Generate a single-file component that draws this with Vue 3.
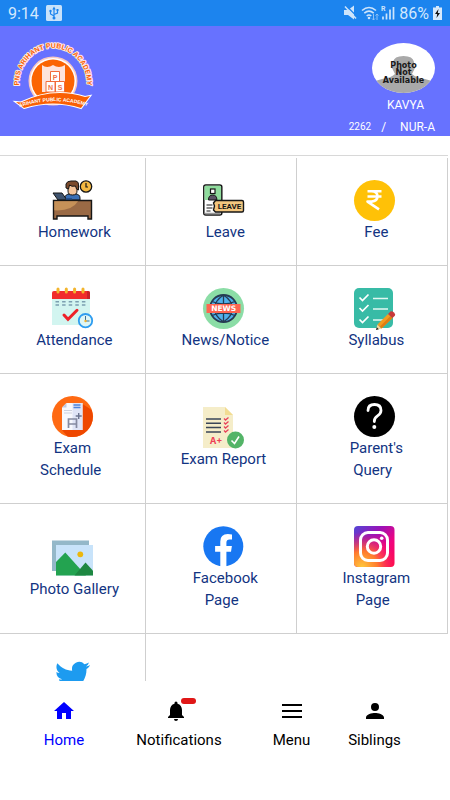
<script setup>
const homework = `
<path d="M13 20v-2q0-4 5-4h5q5 0 5 4v2z" fill="#3a6fb5" stroke="#161616"/>
<path d="M16 5h9v6q0 4-4.500 4T16 11z" fill="#f5c59b" stroke="#161616"/>
<path d="M14 8V4q1-3 5-3h5q3 1 2.500 4v5l-2-1-1-3q-4 1-6-1l-1 4z" fill="#7b4a2b" stroke="#161616"/>
<circle cx="34" cy="6.500" r="5.700" fill="#f4b942" stroke="#161616" stroke-width="1.300"/>
<path d="M34 3v4h2" fill="none" stroke="#161616" stroke-width="1.200"/>
<path d="M1 13h9l5 7H6z" fill="#3f5470" stroke="#161616"/>
<path d="M14 18h6v2h-6z" fill="#254f8b"/>
<path d="M1.500 20.500h38V39H36v-3H5v3H1.500z" fill="#9a6a45" stroke="#161616" stroke-width="1.400"/>
<path d="M2.300 21.300H26q-6 10-23.700 9z" fill="#c69158"/>`

const leave = `
<rect x=".8" y="5" width="18" height="30" rx="2" fill="#fff" stroke="#161616" stroke-width="1.500"/>
<path d="M1.500 20V7q0-1.300 1.300-1.300h14q1.300 0 1.300 1.300v13z" fill="#8fdc9d"/>
<path d="M1.500 33.500h16" stroke="#9a9a9a" stroke-width="1.500"/>
<path d="M5.500 20q0-5 4.200-5t4.200 5z" fill="#5b5266" stroke="#161616"/>
<rect x="7.500" y="9" width="4.500" height="4.500" fill="#fff" stroke="#161616" stroke-width="1.200"/>
<path d="M3.500 25h6M3.500 28h6M3.500 31h4" stroke="#161616" stroke-width="1.200"/>
<path d="M12.500 20.500h26.500q1.500 0 1.500 1.500v8.500q0 1.500-1.500 1.500H12.500l-2-2 1-4-1-3z" fill="#f3c67e" stroke="#161616" stroke-width="1.400"/>
<text x="26.500" y="29.200" font-size="8" font-weight="700" text-anchor="middle" fill="#161616" font-family="Roboto, sans-serif">LEAVE</text>`

const fee = `
<circle cx="20.500" cy="20.500" r="20.500" fill="#ffc107"/>
<path d="M13.500 11.300h14M13.500 16.500h14M13.500 11.300h4q6 .2 6 5t-6 5.300h-4l11.500 7.700" fill="none" stroke="#fff" stroke-width="2.600" stroke-linejoin="round"/>`

const attendance = `
<path d="M0 9h38v28H0z" fill="#d2f5f0"/>
<path d="M0 11V5q0-2 2-2h34q2 0 2 2v6z" fill="#f12c2c"/><path d="M35 3h1q2 0 2 2v6h-3z" fill="#c91f2a"/>
<path d="M6 1v3M14.300 1v3M22.600 1v3M31 1v3" stroke="#f3b52e" stroke-width="3" stroke-linecap="round"/>
<path d="M3.500 13.700h30M3.500 17h30" stroke="#7b9fb0" stroke-width="1.600" stroke-dasharray="3.500 3.100"/>
<path d="m12 27 4 4.300 9-9" fill="none" stroke="#ee2128" stroke-width="3" stroke-linecap="round"/>
<circle cx="33.500" cy="32.700" r="6.700" fill="#def6f5" stroke="#2f9df0" stroke-width="1.800"/>
<path d="M33.500 28v5h4" fill="none" stroke="#3b6f95"/><circle cx="33.500" cy="33" r="1.200" fill="#f4b12e"/>`

const news = `
<circle cx="20.500" cy="20.500" r="20.500" fill="#8bdda6"/>
<circle cx="20.500" cy="20.500" r="13.500" fill="#4fb0ea" stroke="#263b53" stroke-width="1.800"/>
<path d="M20.500 7v27M9 13.500q11.500 5 23 0M9 27.500q11.500-5 23 0M20.500 7q-9 6-9 13.500t9 13.500q9-6 9-13.500T20.500 7" fill="none" stroke="#263b53" stroke-width="1.300"/>
<rect x="3.500" y="16" width="34" height="9" fill="#ff6550"/>
<text x="20.700" y="23.300" font-size="7.500" font-weight="700" text-anchor="middle" fill="#fff" font-family="DejaVu Sans, sans-serif">NEWS</text>`

const syllabus = `
<rect width="39" height="40" rx="5" fill="#38bba6"/>
<path d="m5.500 9.500 3 3 6-6M5.500 20l3 3 6-6M5.500 31.500l3 3 6-6" fill="none" stroke="#fff" stroke-width="1.700"/>
<path d="M19 10.500h15M19 21h15M19 32h11" stroke="#e2f7f2" stroke-width="1.500"/>
<path d="m22 42 1.500-5.500 4 4z" fill="#f4d6a0"/><path d="m22 42 .8-2.800 2 2z" fill="#222"/>
<path d="M23.500 36.500 34 26l4.500 4-11 10.500z" fill="#f39b1f"/><path d="M26 38.500 36.500 28l2 2-11 10.500z" fill="#dd7d14"/>
<path d="m34 26 2.500-2.500q1.500-.8 3.500 1t.8 3.200L38.500 30z" fill="#c8383a"/>`

const examSchedule = `
<circle cx="20.500" cy="20.500" r="20.500" fill="#ff6a13"/>
<path d="M30.500 8 39.700 14A20.500 20.500 0 0 1 15.500 40.400L10 34z" fill="#ee4700"/>
<path d="M14.500 7h16v27H10V11.500z" fill="#f7f8fd"/><path d="M20.500 7h10v27h-10z" fill="#dfe4f6"/>
<path d="M14.500 7v4.500H10z" fill="#c3c9dd"/>
<path d="M21.500 9h7M21.500 11.500h7" stroke="#4e84dd" stroke-width="1.300"/>
<path d="M12 14.500h8M12 17h8" stroke="#ccd0de"/>
<path d="M16.500 32v-9h8v9M16.500 28h8" fill="none" stroke="#858aa1" stroke-width="1.700"/>
<path d="M26.700 17v6M23.700 20h6" stroke="#6c7490" stroke-width="1.400"/>`

const examReport = `
<path d="M0 0h22l8 8v33H0z" fill="#f5edc9"/><path d="M22 0v8h8z" fill="#f2dc92"/>
<path d="M3 12h15M3 16.300h15M3 20.600h15M3 25h15" stroke="#3a4658" stroke-width="1.500"/>
<path d="m21 11.500 1.500 1.500 3-2.500m-4.500 5 1.500 1.500 3-2.500m-4.500 5 1.500 1.500 3-2.500m-4.500 5 1.500 1.500 3-2.500" fill="none" stroke="#e8435a" stroke-width="1.300"/>
<text x="13" y="37" font-size="9" font-weight="700" text-anchor="middle" fill="#ee3f55" font-family="Inter, sans-serif">A+</text>
<circle cx="32.500" cy="33" r="8.500" fill="#53b467"/><path d="m28.500 33.500 3 3 4.500-7" fill="none" stroke="#fff" stroke-width="1.600"/>`

const query = `
<circle cx="20.500" cy="20.500" r="20.500" fill="#000"/>
<path d="M14 14.500q0-6 6.500-6t6.500 6q0 3-3.500 5.300t-3.200 5.700" fill="none" stroke="#fff" stroke-width="2.800" stroke-linecap="round"/>
<circle cx="20.300" cy="31" r="2" fill="#fff"/>`

const gallery = `
<path d="M0 3.500h37v30.500H0z" fill="#94b8c9"/><path d="M4 8h37v30.500H4z" fill="#c8e3fa"/>
<path d="m4 25 9.300-9.500L34 38.500H4z" fill="#23a350"/><path d="m22.500 38.500 11-13 7.500 8.200v4.800z" fill="#1d8741"/>
<circle cx="28.300" cy="17.300" r="2.900" fill="#ecb70d"/>`

const facebook = `
<circle cx="20.300" cy="20.300" r="20" fill="#1877f2"/>
<path d="M17.300 41V25.700h-5.200v-5.600h5.200v-4.500q0-7.500 7.500-7.500 2.200 0 4.200.4v5h-2.400q-3.200 0-3.200 3v3.600h5.500l-.9 5.600h-4.600V41z" fill="#fff"/>`

const instagram = `
<defs>
<linearGradient id="ig-top" x1="0" y1="0" x2="1" y2="1"><stop stop-color="#5148d6"/><stop offset=".35" stop-color="#9a12b8"/><stop offset=".65" stop-color="#f0047f"/><stop offset="1" stop-color="#ff0a4b"/></linearGradient>
<radialGradient id="ig-glow" cx=".2" cy="1" r=".85"><stop stop-color="#ffc83c"/><stop offset=".45" stop-color="#ff7a2e"/><stop offset="1" stop-color="#ff1a5e" stop-opacity="0"/></radialGradient>
</defs>
<rect width="40.500" height="41" rx="4" fill="url(#ig-top)"/><rect width="40.500" height="41" rx="4" fill="url(#ig-glow)"/>
<rect x="6.500" y="6.500" width="27" height="28" rx="7.500" fill="none" stroke="#fff" stroke-width="3"/>
<circle cx="20" cy="20.500" r="6.700" fill="none" stroke="#fff" stroke-width="3"/><circle cx="27.700" cy="12.300" r="1.800" fill="#fff"/>`

const twitter = `
<path transform="translate(3 2.700) scale(1.460)" fill="#1d9bf0" d="M23.953 4.570a10 10 0 0 1-2.825.775 4.958 4.958 0 0 0 2.163-2.723c-.951.555-2.005.959-3.127 1.184a4.920 4.920 0 0 0-8.384 4.482C7.690 8.095 4.067 6.130 1.640 3.162a4.822 4.822 0 0 0-.666 2.475c0 1.710.870 3.213 2.188 4.096a4.904 4.904 0 0 1-2.228-.616v.060a4.923 4.923 0 0 0 3.946 4.827 4.996 4.996 0 0 1-2.212.085 4.936 4.936 0 0 0 4.604 3.417 9.867 9.867 0 0 1-6.102 2.105c-.390 0-.779-.023-1.170-.067a13.995 13.995 0 0 0 7.557 2.209c9.053 0 13.998-7.496 13.998-13.985 0-.210 0-.420-.015-.630A9.935 9.935 0 0 0 24 4.590z"/>`

// Leading and trailing spaces in the lines are kept by the label's white-space.
const tiles = [
  { lines: [' Homework'], art: homework },
  { lines: [' Leave'], art: leave },
  { lines: [' Fee'], art: fee },
  { lines: [' Attendance'], art: attendance },
  { lines: [' News/Notice'], art: news },
  { lines: [' Syllabus'], art: syllabus },
  { lines: ['Exam', 'Schedule '], art: examSchedule },
  { lines: ['Exam Report'], art: examReport },
  { lines: [' Parent\'s', 'Query '], art: query },
  { lines: [' Photo Gallery'], art: gallery },
  { lines: [' Facebook', 'Page '], art: facebook },
  { lines: [' Instagram', 'Page '], art: instagram },
  { lines: [], name: 'Twitter', art: twitter },
]

const tabs = [
  { label: 'Home', icon: 'M10 20v-6h4v6h5v-8h3L12 3 2 12h3v8z', active: true },
  { label: 'Notifications', icon: 'M12 22c1.100 0 2-.900 2-2h-4a2 2 0 0 0 2 2zm6-6v-5c0-3.070-1.640-5.640-4.500-6.320V4a1.500 1.500 0 0 0-3 0v.680C7.630 5.360 6 7.920 6 11v5l-2 2v1h16v-1z', badge: true },
  { label: 'Menu', icon: 'M2 5h20v2H2zm0 6h20v2H2zm0 6h20v2H2z' },
  { label: 'Siblings', icon: 'M12 12a4 4 0 1 0 0-8 4 4 0 0 0 0 8zm0 2c-3 0-9 1.300-9 4.500V20h18v-1.500c0-3.200-6-4.500-9-4.500z' },
]
</script>

<template>
  <div class="app">
    <div class="status">
      <span class="clock">9:14</span>
      <svg class="usb" width="16" height="16" viewBox="0 0 16 16">
        <rect width="16" height="16" rx="1.500" fill="#c9e2fa" />
        <path d="M8 3v10M8 11 4.500 9V6.500M8 9.500 11.500 8V5.500" fill="none" stroke="#1c84ee" stroke-width="1.200" />
        <path d="M8 1.500 9.700 4.500H6.300zM10.500 4h2v2h-2z" fill="#1c84ee" />
        <circle cx="4.500" cy="6" r="1.200" fill="#1c84ee" /><circle cx="8" cy="13" r="1.500" fill="#1c84ee" />
      </svg>
      <svg class="signals" width="51" height="18" viewBox="0 0 51 18" fill="none" stroke="#cde4fb">
        <path d="M0 6h4l6-4.500v14L4 11H0z" fill="#cde4fb" stroke="none" />
        <path d="M2 1.500 13 12.500" stroke="#1c84ee" stroke-width="1.300" /><path d="m1 2.500 11 12" stroke-width="1.500" />
        <path d="M18 6.500q7-6 14 0M20.300 9.200q4.700-4 9.400 0M22.700 12q2.300-2 4.600 0" stroke-width="1.600" />
        <circle cx="25" cy="14" r="1.300" fill="#cde4fb" stroke="none" />
        <path d="M29.500 10v6m-1.500-1.500 1.500 1.500 1.500-1.500M33 16v-6m-1.500 1.500L33 10l1.500 1.500" stroke="#8fc1f6" />
        <text x="37" y="7" font-size="7" font-weight="700" fill="#cde4fb" stroke="none" font-family="Roboto, sans-serif">R</text>
        <path d="M39 15.500v-3M42.500 15.500v-6M46 15.500v-10M49.500 15.500V3" stroke-width="1.700" />
      </svg>
      <span class="percent">86%</span>
      <svg class="battery" width="9" height="14" viewBox="0 0 9 14">
        <path d="M3 0h3v1.500h3V14H0V1.500h3z" fill="#d6e9fc" /><path d="M5.500 3 2 8h2.200l-.7 4L7 7H4.800z" fill="#111" />
      </svg>
    </div>

    <header class="header">
      <svg class="logo" width="84" height="74" viewBox="0 0 84 74" role="img" aria-label="PNS Arihant Public Academy">
        <defs>
          <path id="arc" d="M7 46A34 36 0 0 1 75 46" />
          <path id="ribbon" d="M8 69Q41 58 75 68" />
        </defs>
        <text class="arc-text"><textPath href="#arc" startOffset="50%" text-anchor="middle">PNS ARIHANT PUBLIC ACADEMY</textPath></text>
        <circle cx="41" cy="43" r="24.500" fill="#f7c9c4" /><circle cx="41" cy="43" r="23" fill="#fff" />
        <circle cx="41" cy="43" r="21.500" fill="#fb6403" />
        <path d="M30 27q5 4 11 0 6 4 12 0v27H30z" fill="#fde3dc" />
        <g fill="#fff" stroke="#f26b3a"><path d="M38.500 33.500h9v10h-9zM34 43.500h9v10.500h-9zM43.500 43.500h9v10.500h-9z" /></g>
        <g class="blocks"><text x="43" y="41.500">P</text><text x="38.500" y="51.500">N</text><text x="48" y="51.500">S</text></g>
        <path d="M4 64l5 .5Q41 49 73 59l5-1-9 12q-28-9-57 0z" fill="#fff" stroke="#fff" stroke-width="2" />
        <path d="M4 64l5 .5Q41 49 73 59l5-1-9 12q-28-9-57 0z" fill="#f95f04" />
        <text class="ribbon-text"><textPath href="#ribbon" startOffset="50%" text-anchor="middle">ARIHANT PUBLIC ACADEMY</textPath></text>
      </svg>

      <div class="student">
        <svg class="photo" width="63" height="50" viewBox="0 0 63 50" role="img" aria-label="Photo Not Available">
          <defs><clipPath id="oval"><ellipse cx="31.500" cy="25" rx="31.500" ry="25" /></clipPath></defs>
          <g clip-path="url(#oval)">
            <path d="M0 0h63v50H0z" fill="#fff" />
            <path d="M21 23v-4q1-6 10.500-6T42 19v4l1 2-3 6q4 4 13 5l10 3v11H0V39l10-3q9-1 13-5l-3-6z" fill="#a9a9a9" />
          </g>
          <g class="photo-text"><text x="31.500" y="25">Photo</text><text x="31.500" y="32">Not</text><text x="31.500" y="40">Available</text></g>
        </svg>
        <span class="name">KAVYA</span>
        <div class="meta"><span class="roll">2262</span><span>/</span><span class="class-name">NUR-A</span></div>
      </div>
    </header>

    <main class="content">
      <div class="tiles">
        <a v-for="(tile, i) in tiles" :key="i" href="#" class="tile" :aria-label="tile.name">
          <svg class="art" width="41" height="41" viewBox="0 0 41 41" aria-hidden="true" v-html="tile.art"></svg>
          <span class="label"><span v-for="line in tile.lines" :key="line" class="line">{{ line }}</span></span>
        </a>
      </div>
    </main>

    <nav class="tabs">
      <button v-for="tab in tabs" :key="tab.label" type="button" class="tab" :class="{ active: tab.active, noted: tab.badge }">
        <span class="tab-icon">
          <svg width="24" height="24" viewBox="0 0 24 24" fill="currentColor" aria-hidden="true"><path :d="tab.icon" /></svg>
          <span v-if="tab.badge" class="badge"></span>
        </span>
        <span>{{ tab.label }}</span>
      </button>
    </nav>
  </div>
</template>

<style>
body {
  margin: 0;
  background: #fff;
}
</style>

<style scoped>
.app {
  display: flex;
  flex-direction: column;
  height: 100vh;
  overflow: hidden;
  font-family: Roboto, "Liberation Sans", sans-serif;
}

.status {
  display: flex;
  align-items: center;
  flex: none;
  height: 26px;
  padding: 0 8px;
  background: #1c84ee;
  color: #d3e8fd;
  font-size: 16px;
}
.usb {
  margin-left: 7px;
}
.signals {
  margin-left: auto;
}
.percent {
  margin-left: 4px;
}
.battery {
  margin-left: 4px;
}

.header {
  display: flex;
  justify-content: space-between;
  align-items: flex-start;
  flex: none;
  padding: 12px 15px 0 12px;
  background: #6772ff;
  color: #fff;
}
.arc-text {
  font: 700 7px "Liberation Sans", sans-serif;
  fill: #f95f04;
  stroke: #ffe9e4;
  stroke-width: 2px;
  stroke-linejoin: round;
  paint-order: stroke;
}
.ribbon-text {
  font: 700 5px "Liberation Sans Narrow", "Liberation Sans", sans-serif;
  fill: #fff;
}
.blocks {
  font: 700 7px "Liberation Sans", sans-serif;
  fill: #ee7148;
  text-anchor: middle;
}
.student {
  display: flex;
  flex-direction: column;
  align-items: flex-end;
  padding-top: 5px;
  font-size: 12px;
  line-height: 16px;
}
.photo-text {
  font: 700 8px "DejaVu Sans", sans-serif;
  fill: #181818;
  text-anchor: middle;
}
.name {
  padding: 4px 11px 6px 0;
}
.meta {
  display: flex;
  gap: 10px;
  padding-bottom: 1px;
}
.roll {
  font-size: 10px;
}
.class-name {
  margin-left: 4px;
}

.content {
  flex: 1;
  min-height: 0;
  padding: 19px 2px 0 0;
  overflow: hidden;
}
.tiles {
  display: grid;
  grid-template-columns: 146fr 151fr 151fr;
  padding-top: 2px;
  border-top: 1px solid #d8d8d8;
}
.tile {
  display: flex;
  flex-direction: column;
  align-items: center;
  justify-content: center;
  padding: 22px 0 22px 5px;
  border-right: 1px solid #cfcfcf;
  border-bottom: 1px solid #cfcfcf;
  color: #123482;
  font-size: 15px;
  line-height: 22px;
  text-decoration: none;
}
.tile:nth-child(3n + 1) {
  padding-left: 0;
}
.art {
  display: block;
  overflow: visible;
}
.label {
  display: flex;
  flex-direction: column;
  align-items: center;
  white-space: pre;
}

.tabs {
  display: grid;
  grid-template-columns: 88fr 142fr 83fr 83fr;
  flex: none;
  padding: 18px 34px 49px 20px;
  background: #fff;
}
.tab {
  display: flex;
  flex-direction: column;
  align-items: center;
  gap: 6px;
  padding: 0;
  border: 0;
  background: none;
  color: #000;
  font: inherit;
  font-size: 15px;
  line-height: 22px;
}
.active {
  color: #0000ff;
}
.tab-icon {
  position: relative;
  display: flex;
}
.noted .tab-icon {
  margin-right: 6px;
}
.badge {
  position: absolute;
  top: -1px;
  left: 17px;
  width: 15px;
  height: 6px;
  border-radius: 3px;
  background: #e01717;
}
</style>
